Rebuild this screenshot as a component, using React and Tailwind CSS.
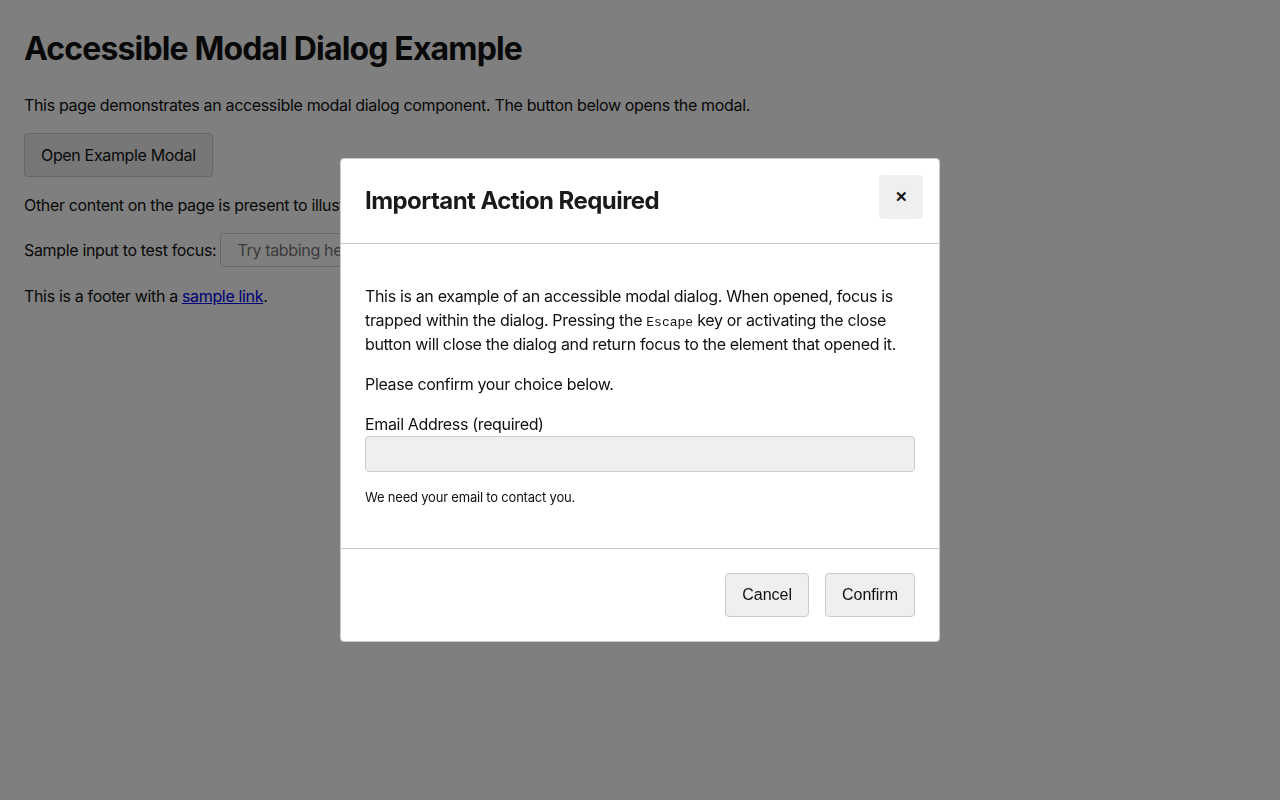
import React from 'react';

const sans = { fontFamily: 'Inter, "Noto Sans", sans-serif' };
const mono = { fontFamily: '"Liberation Mono", "Courier New", monospace' };

function PageContent() {
  return (
    <div className="p-6 text-[16px] leading-6 tracking-[-0.34px] text-[#111]" style={sans}>
      <h1 className="text-[32px] font-bold leading-[50px] tracking-[-0.85px]">Accessible Modal Dialog Example</h1>
      <p className="mt-[19px]">This page demonstrates an accessible modal dialog component. The button below opens the modal.</p>
      <button className="mt-4 h-11 rounded border border-[#ccc] bg-[#efefef] px-4 text-[16px] tracking-[-0.34px]">Open Example Modal</button>
      <p className="mt-4">Other content on the page is present to illustrate that focus stays inside the dialog while it is open.</p>
      <div className="mt-4 flex items-center gap-1">
        <span>Sample input to test focus:</span>
        <input
          className="h-[34px] w-[200px] rounded-sm border border-[#ccc] bg-white px-4 text-[16px] tracking-[-0.34px] placeholder:text-[#777]"
          placeholder="Try tabbing here"
        />
      </div>
      <p className="mt-[17px]">
        This is a footer with a <a href="#" className="text-[#0000ee] underline">sample link</a>.
      </p>
    </div>
  );
}

function Modal() {
  const btn = { fontFamily: '"Liberation Sans", Arial, sans-serif' };
  return (
    <div className="fixed inset-0 flex items-center justify-center bg-black/50">
      <div className="relative w-[600px] rounded border border-[#ccc] bg-white text-[#111]" style={sans}>
        <div className="border-b border-[#ccc] px-6 py-6">
          <h2 className="text-[24px] font-bold leading-9 tracking-[-0.56px] text-[#1a1a1a]">Important Action Required</h2>
          <button
            className="absolute right-4 top-4 flex h-11 w-11 items-center justify-center rounded bg-[#efefef] text-[15px] font-bold text-[#111]"
            aria-label="Close"
          >
            ✕
          </button>
        </div>
        <div className="px-6 py-6 text-[16px] leading-6 tracking-[-0.34px]">
          <p className="mt-4">
            This is an example of an accessible modal dialog. When opened, focus is trapped within the dialog. Pressing the{' '}
            <code className="text-[13px] leading-none tracking-normal" style={mono}>Escape</code>{' '}
            key or activating the close button will close the dialog and return focus to the element that opened it.
          </p>
          <p className="mt-4">Please confirm your choice below.</p>
          <label className="mt-4 block">Email Address (required)</label>
          <input className="block h-9 w-full rounded border border-[#ccc] bg-[#efefef] px-2" />
          <p className="mt-4 mb-[18px] text-[13px] leading-[18px] tracking-[-0.2px]">We need your email to contact you.</p>
        </div>
        <div className="flex justify-end gap-4 border-t border-[#ccc] px-6 py-6" style={btn}>
          <button className="h-11 rounded border border-[#ccc] bg-[#efefef] px-4 text-[16px] text-[#111]">Cancel</button>
          <button className="h-11 rounded border border-[#ccc] bg-[#efefef] px-4 text-[16px] text-[#111]">Confirm</button>
        </div>
      </div>
    </div>
  );
}

export default function App() {
  return (
    <div className="relative min-h-[800px] bg-white">
      <PageContent />
      <Modal />
    </div>
  );
}
